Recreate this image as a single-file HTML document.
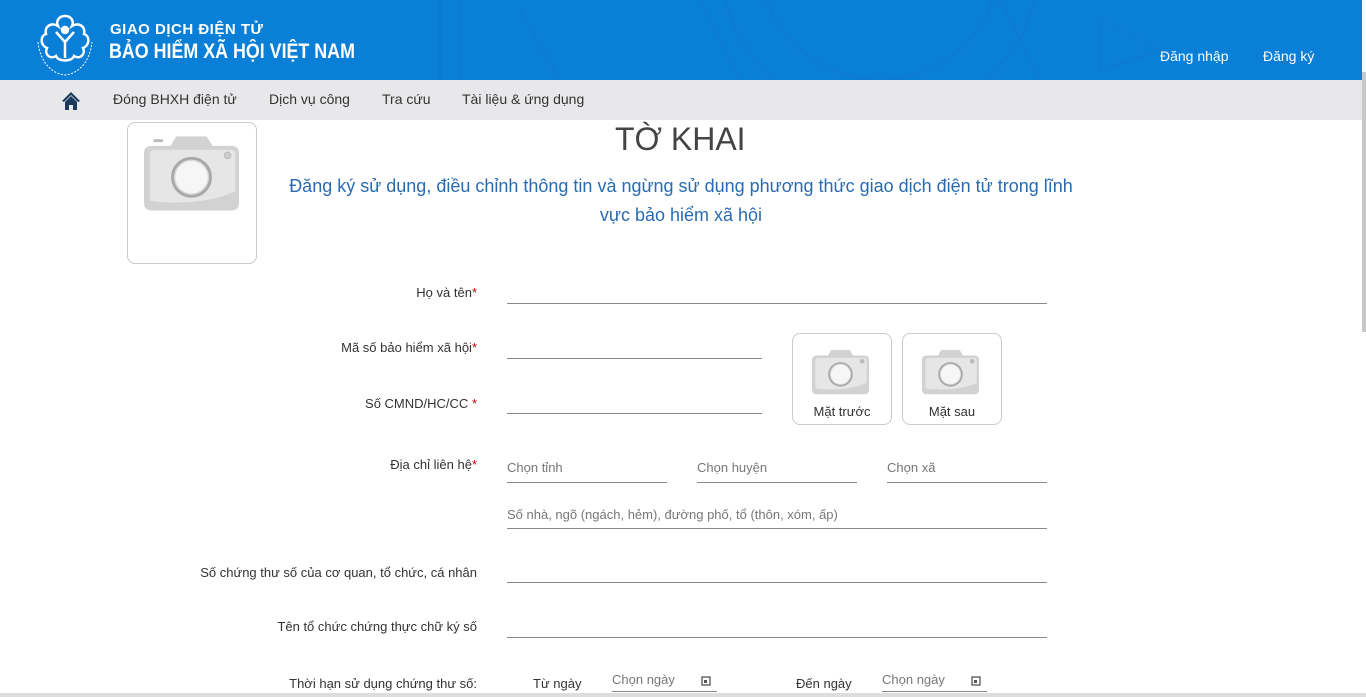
<!DOCTYPE html>
<html><head><meta charset="utf-8"><style>
*{margin:0;padding:0;box-sizing:border-box}
body{width:1366px;height:697px;overflow:hidden;background:#fff;font-family:"Liberation Sans",Arial,sans-serif;position:relative}
.hdr{position:absolute;left:0;top:0;width:1362px;height:80px;background:#0a7fd8}
.nav{position:absolute;left:0;top:80px;width:1362px;height:40px;background:#e8e8ea}
.sb{position:absolute;right:0;top:72px;width:4px;height:260px;background:#c8c8c8}
.t{position:absolute;white-space:nowrap}
.nav .t{top:11px;font-size:14px;color:#333}
.lbl{position:absolute;font-size:13px;color:#333;text-align:right;white-space:nowrap;right:889px}
.ln{position:absolute;height:1px;background:#888}
.ph{position:absolute;font-size:13px;color:#777;white-space:nowrap}
.box{position:absolute;border:1px solid #ccc;border-radius:8px;background:#fff}
</style></head><body>
<div class="hdr">
<svg style="position:absolute;left:400px;top:0" width="800" height="80" fill="none" stroke="#1a6cba" stroke-width="1.2" opacity=".35">
<circle cx="480" cy="-40" r="160"/><circle cx="480" cy="-40" r="120"/><path d="M300 0 L340 80 M600 0 L640 80 M700 20 L760 50 L700 70 Z M120 10 L160 80 M40 0 L40 80 M60 0 L60 80"/></svg>
<svg style="position:absolute;left:34px;top:12px" width="62" height="66" viewBox="0 0 62 66" fill="none" stroke="#fff" stroke-width="2.5">
<path d="M31 4 C38 4 40 10 38 14 C44 10 52 14 50 22 C56 24 56 33 49 36 C52 42 46 48 40 44 C38 50 24 50 22 44 C16 48 10 42 13 36 C6 33 6 24 12 22 C10 14 18 10 24 14 C22 10 24 4 31 4Z"/>
<circle cx="31" cy="18" r="3" fill="#fff"/><path d="M22 20 L31 30 L40 20 M31 30 V46"/>
<path d="M4 30 C6 50 18 62 31 63 C44 62 56 50 58 30" stroke-width="1" stroke-dasharray="2 1.5"/></svg>
<div class="t" style="left:110px;top:21px;color:#fff;font-weight:bold;font-size:15px;letter-spacing:.5px">GIAO DỊCH ĐIỆN TỬ</div>
<div class="t" style="left:109px;top:40px;color:#fff;font-weight:bold;font-size:21px;transform:scaleX(.85);transform-origin:left">BẢO HIỂM XÃ HỘI VIỆT NAM</div>
<div class="t" style="left:1160px;top:48px;color:#fff;font-size:14px">Đăng nhập</div>
<div class="t" style="left:1263px;top:48px;color:#fff;font-size:14px">Đăng ký</div>
</div>
<div class="nav">
<svg style="position:absolute;left:61px;top:11px" width="20" height="19" viewBox="0 0 20 19"><path d="M10 1 L1 10 L3 11 L10 4 L17 11 L19 10Z M4 11 V19 H8 V14 H12 V19 H16 V11 L10 5Z" fill="#1a3a5c"/></svg>
<div class="t" style="left:113px">Đóng BHXH điện tử</div>
<div class="t" style="left:269px">Dịch vụ công</div>
<div class="t" style="left:382px">Tra cứu</div>
<div class="t" style="left:462px">Tài liệu &amp; ứng dụng</div>
</div>
<div class="sb"></div>
<div class="box" style="left:127px;top:122px;width:130px;height:142px"></div>
<svg style="position:absolute;left:144px;top:134px" width="95" height="77" viewBox="0 0 100 80">
<path d="M28 12 L34 2 H66 L72 12 H92 Q100 12 100 20 V72 Q100 80 92 80 H8 Q0 80 0 72 V20 Q0 12 8 12Z" fill="#d2d2d2"/>
<path d="M28 16 H92 Q96 16 96 22 V60 Q60 76 6 70 V22 Q6 16 12 16Z" fill="#e6e6e6"/>
<rect x="10" y="5" width="10" height="3" fill="#bbb"/><circle cx="88" cy="22" r="3.5" fill="#ccc" stroke="#bbb"/>
<circle cx="50" cy="45" r="20" fill="#d8d8d8" stroke="#a8a8a8" stroke-width="3"/><circle cx="50" cy="45" r="17" fill="#f6f6f6"/></svg>
<div class="t" style="left:615px;top:121px;font-size:32px;color:#444">TỜ KHAI</div>
<div class="t" style="left:0;width:1362px;text-align:center;top:172px;font-size:18px;color:#2a6bb0;line-height:29px;white-space:normal;padding:0 280px">Đăng ký sử dụng, điều chỉnh thông tin và ngừng sử dụng phương thức giao dịch điện tử trong lĩnh<br>vực bảo hiểm xã hội</div>

<div class="lbl" style="top:285px">Họ và tên<span style="color:#c00">*</span></div>
<div class="ln" style="left:507px;top:303px;width:540px"></div>
<div class="lbl" style="top:340px">Mã số bảo hiểm xã hội<span style="color:#c00">*</span></div>
<div class="ln" style="left:507px;top:358px;width:255px"></div>
<div class="lbl" style="top:396px">Số CMND/HC/CC <span style="color:#c00">*</span></div>
<div class="ln" style="left:507px;top:413px;width:255px"></div>

<div class="box" style="left:792px;top:333px;width:100px;height:92px"></div>
<div class="box" style="left:902px;top:333px;width:100px;height:92px"></div>
<svg style="position:absolute;left:812px;top:347px" width="57" height="49" viewBox="0 0 100 80">
<path d="M28 12 L34 2 H66 L72 12 H92 Q100 12 100 20 V72 Q100 80 92 80 H8 Q0 80 0 72 V20 Q0 12 8 12Z" fill="#d2d2d2"/><path d="M28 16 H92 Q96 16 96 22 V60 Q60 76 6 70 V22 Q6 16 12 16Z" fill="#e6e6e6"/><circle cx="88" cy="22" r="4" fill="#bbb"/><circle cx="50" cy="45" r="20" fill="#d8d8d8" stroke="#a8a8a8" stroke-width="3"/><circle cx="50" cy="45" r="17" fill="#f6f6f6"/></svg>
<svg style="position:absolute;left:922px;top:347px" width="57" height="49" viewBox="0 0 100 80">
<path d="M28 12 L34 2 H66 L72 12 H92 Q100 12 100 20 V72 Q100 80 92 80 H8 Q0 80 0 72 V20 Q0 12 8 12Z" fill="#d2d2d2"/><path d="M28 16 H92 Q96 16 96 22 V60 Q60 76 6 70 V22 Q6 16 12 16Z" fill="#e6e6e6"/><circle cx="88" cy="22" r="4" fill="#bbb"/><circle cx="50" cy="45" r="20" fill="#d8d8d8" stroke="#a8a8a8" stroke-width="3"/><circle cx="50" cy="45" r="17" fill="#f6f6f6"/></svg>
<div class="t" style="left:792px;width:100px;text-align:center;top:404px;font-size:13px;color:#333">Mặt trước</div>
<div class="t" style="left:902px;width:100px;text-align:center;top:404px;font-size:13px;color:#333">Mặt sau</div>

<div class="lbl" style="top:457px">Địa chỉ liên hệ<span style="color:#c00">*</span></div>
<div class="ph" style="left:507px;top:460px">Chọn tỉnh</div>
<div class="ph" style="left:697px;top:460px">Chọn huyện</div>
<div class="ph" style="left:887px;top:460px">Chọn xã</div>
<div class="ln" style="left:507px;top:482px;width:160px"></div>
<div class="ln" style="left:697px;top:482px;width:160px"></div>
<div class="ln" style="left:887px;top:482px;width:160px"></div>
<div class="ph" style="left:507px;top:507px">Số nhà, ngõ (ngách, hẻm), đường phố, tổ (thôn, xóm, ấp)</div>
<div class="ln" style="left:507px;top:528px;width:540px"></div>

<div class="lbl" style="top:565px">Số chứng thư số của cơ quan, tổ chức, cá nhân</div>
<div class="ln" style="left:507px;top:582px;width:540px"></div>
<div class="lbl" style="top:619px">Tên tổ chức chứng thực chữ ký số</div>
<div class="ln" style="left:507px;top:637px;width:540px"></div>

<div class="lbl" style="top:676px">Thời hạn sử dụng chứng thư số:</div>
<div class="t" style="left:533px;top:676px;font-size:13px;color:#333">Từ ngày</div>
<div class="ph" style="left:612px;top:672px">Chọn ngày</div>
<div class="ln" style="left:612px;top:691px;width:105px"></div>
<div class="t" style="left:796px;top:676px;font-size:13px;color:#333">Đến ngày</div>
<div class="ph" style="left:882px;top:672px">Chọn ngày</div>
<div class="ln" style="left:882px;top:691px;width:105px"></div>
<svg style="position:absolute;left:701px;top:675px" width="10" height="11"><rect x="1" y="2" width="8" height="8" fill="none" stroke="#555" stroke-width="1.3"/><rect x="3" y="5" width="3" height="3" fill="#555"/></svg>
<svg style="position:absolute;left:971px;top:675px" width="10" height="11"><rect x="1" y="2" width="8" height="8" fill="none" stroke="#555" stroke-width="1.3"/><rect x="3" y="5" width="3" height="3" fill="#555"/></svg>
<div style="position:absolute;left:0;top:693px;width:1366px;height:4px;background:#ddd"></div>
</body></html>
